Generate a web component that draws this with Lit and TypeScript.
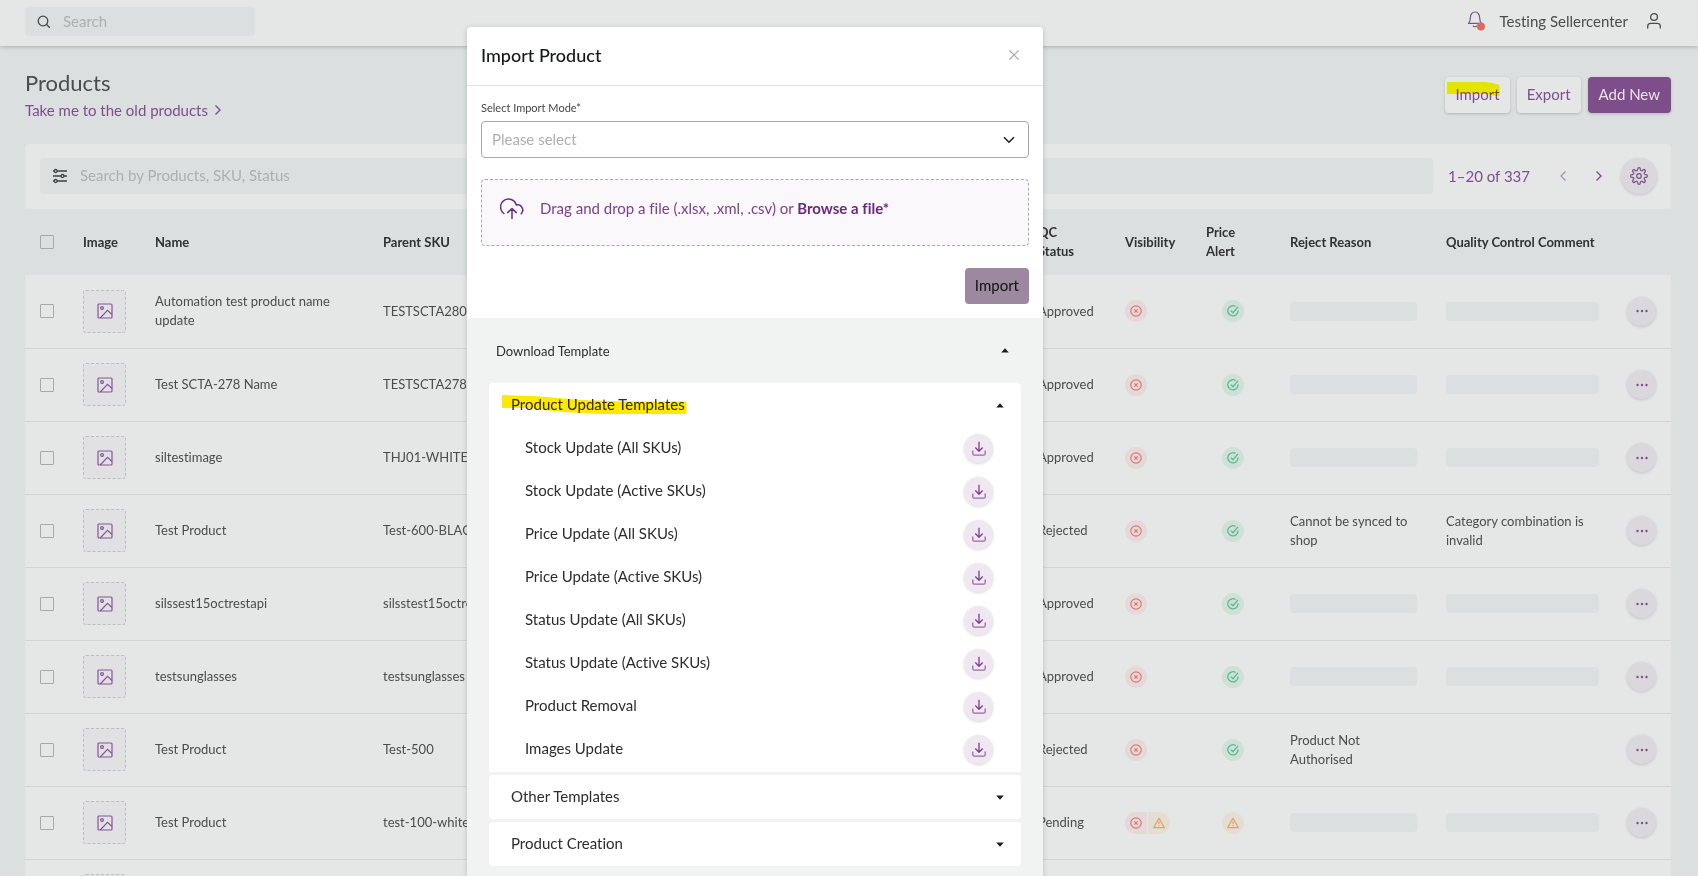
import { LitElement, html, css, nothing } from "lit";
import { customElement, state } from "lit/decorators.js";

interface Product {
  name: string;
  sku: string;
  status: string;
  warn?: boolean;
  reason?: string;
  comment?: string;
}

const PRODUCTS: Product[] = [
  { name: "Automation test product name update", sku: "TESTSCTA280", status: "Approved" },
  { name: "Test SCTA-278 Name", sku: "TESTSCTA278", status: "Approved" },
  { name: "siltestimage", sku: "THJ01-WHITE", status: "Approved" },
  { name: "Test Product", sku: "Test-600-BLACK", status: "Rejected", reason: "Cannot be synced to shop", comment: "Category combination is invalid" },
  { name: "silssest15octrestapi", sku: "silsstest15octrestapi", status: "Approved" },
  { name: "testsunglasses", sku: "testsunglasses", status: "Approved" },
  { name: "Test Product", sku: "Test-500", status: "Rejected", reason: "Product Not Authorised", comment: "" },
  { name: "Test Product", sku: "test-100-white", status: "Pending", warn: true },
  { name: "", sku: "", status: "" },
];

const UPDATE_TEMPLATES = [
  "Stock Update (All SKUs)",
  "Stock Update (Active SKUs)",
  "Price Update (All SKUs)",
  "Price Update (Active SKUs)",
  "Status Update (All SKUs)",
  "Status Update (Active SKUs)",
  "Product Removal",
  "Images Update",
];

const searchIcon = html`<svg width="14" height="14" viewBox="0 0 14 14" fill="none" stroke="#444746" stroke-width="1.3"><circle cx="6" cy="6" r="4.8"/><path d="M9.5 9.5 12.8 12.8"/></svg>`;
const bellIcon = html`<svg width="18" height="20" viewBox="0 0 18 20" fill="none"><path d="M1.500 12.400c1.300-1.200 1.800-2.400 1.800-5.400C3.300 3.400 5.200 1 8 1s4.700 2.400 4.700 6c0 3 .5 4.200 1.800 5.400zM6 14.600c.6 1.500 3.400 1.500 4 0" stroke="#7c4f8b" stroke-width="1.200" stroke-linejoin="round"/><circle cx="14" cy="15.500" r="4" fill="#dd6a62"/></svg>`;
const userIcon = html`<svg width="16" height="18" viewBox="0 0 16 18" fill="none" stroke="#4a4d4c" stroke-width="1.300" stroke-linecap="round"><circle cx="8" cy="5" r="3.400"/><path d="M1.700 16v-1.700c0-1.900 1.300-3 3-3h6.600c1.700 0 3 1.100 3 3V16"/></svg>`;
const slidersIcon = html`<svg width="16" height="16" viewBox="0 0 16 16" fill="none" stroke="#3f4241" stroke-width="1.300"><path d="M1 3h1.300M5 3h10M1 8h8M12 8h3M1 13h1.300M5 13h10"/><circle cx="3.700" cy="3" r="1.500"/><circle cx="10.500" cy="8" r="1.500"/><circle cx="3.700" cy="13" r="1.500"/></svg>`;
const chevronRight = html`<svg width="8" height="12" viewBox="0 0 8 12" fill="none" stroke="currentColor" stroke-width="1.400"><path d="M1.500 1.500 6 6 1.500 10.500"/></svg>`;
const chevronLeft = html`<svg width="8" height="12" viewBox="0 0 8 12" fill="none" stroke="currentColor" stroke-width="1.200"><path d="M6.500 1.500 2 6l4.500 4.500"/></svg>`;
const gearIcon = html`<svg width="18" height="18" viewBox="0 0 18 18" fill="none" stroke="#7c4f8b" stroke-width="1.200" stroke-linejoin="round"><circle cx="9" cy="9" r="2.300"/><path d="M7.700 1.900a1.300 1.300 0 0 1 2.600 0v.7a1.300 1.300 0 0 0 2.200.9l.5-.5a1.400 1.400 0 0 1 2 2l-.5.500a1.300 1.300 0 0 0 .9 2.200h.7a1.300 1.300 0 0 1 0 2.600h-.7a1.300 1.300 0 0 0-.9 2.200l.5.500a1.400 1.400 0 0 1-2 2l-.5-.5a1.300 1.300 0 0 0-2.200.9v.7a1.300 1.300 0 0 1-2.600 0v-.7a1.300 1.300 0 0 0-2.200-.9l-.5.500a1.400 1.400 0 0 1-2-2l.5-.5a1.300 1.300 0 0 0-.9-2.200h-.7a1.300 1.300 0 0 1 0-2.600h.7a1.300 1.300 0 0 0 .9-2.200L3 5a1.400 1.400 0 0 1 2-2l.5.500a1.300 1.300 0 0 0 2.200-.9z"/></svg>`;
const pictureIcon = html`<svg width="16" height="16" viewBox="0 0 16 16" fill="none" stroke="#85569a" stroke-width="1.200"><rect x="1" y="1" width="14" height="14" rx="1"/><circle cx="5" cy="5" r="1.400"/><path d="M3.200 15 10.500 7.300 15 11.500"/></svg>`;
const rejectedIcon = html`<svg width="12" height="12" viewBox="0 0 12 12" fill="none" stroke="#dd7770" stroke-width="1.200"><circle cx="6" cy="6" r="5.200"/><path d="M4.300 4.300 7.700 7.700M7.700 4.300 4.300 7.700"/></svg>`;
const okIcon = html`<svg width="12" height="12" viewBox="0 0 12 12" fill="none" stroke="#55bd8c" stroke-width="1.300"><path d="M8.600 1.500A5.100 5.100 0 1 0 11 5.500"/><path d="M3.900 5.700 6 7.700 11 1.800"/></svg>`;
const warnIcon = html`<svg width="12" height="12" viewBox="0 0 12 12" fill="none" stroke="#e2a55c" stroke-width="1.200" stroke-linejoin="round"><path d="M6 1.200 11.300 10.600H.7zM6 4.500v2.700M6 8.300v1"/></svg>`;
const dotsIcon = html`<svg width="12" height="4" viewBox="0 0 12 4" fill="#7c4f8b"><circle cx="1.500" cy="2" r="1.200"/><circle cx="6" cy="2" r="1.200"/><circle cx="10.500" cy="2" r="1.200"/></svg>`;
const closeIcon = html`<svg width="10" height="10" viewBox="0 0 10 10" stroke="#a3a7a6" stroke-width="1.100"><path d="M.5.500 9.500 9.500M9.500.5.500 9.500"/></svg>`;
const chevronDown = html`<svg class="chev" width="12" height="8" viewBox="0 0 12 8" fill="none" stroke="#1f2221" stroke-width="1.500"><path d="M1 1.200 6 6.300 11 1.200"/></svg>`;
const cloudIcon = html`<svg width="24" height="22" viewBox="0 0 24 22" fill="none" stroke="#6d2c80" stroke-width="1.500" stroke-linecap="round" stroke-linejoin="round"><path d="M3.900 15.500A8 8 0 1 1 16.300 6.900a5.300 5.300 0 0 1 4.900 8.900"/><path d="M12 20.500v-9.700M7.700 14.600 12 10.500l4.300 4.100"/></svg>`;
const downloadIcon = html`<svg width="14" height="16" viewBox="0 0 14 16" fill="none" stroke-linejoin="round"><path d="M.8 9.500v3.200c0 .9.500 1.500 1.500 1.500h9.400c1 0 1.500-.6 1.500-1.500V9.500" stroke="#9a68aa" stroke-width="1.300"/><path d="M7 .8v9.200M3.300 6.500 7 10.200l3.700-3.700" stroke="#7b3d8e" stroke-width="1.300"/></svg>`;
const triUp = html`<svg width="8" height="5" viewBox="0 0 8 5" fill="#1b1e1d"><path d="M.2 4.600 4 .3l3.800 4.300z"/></svg>`;
const triDown = html`<svg width="8" height="5" viewBox="0 0 8 5" fill="#1b1e1d"><path d="M.2.400 4 4.700 7.800.400z"/></svg>`;

@customElement("app-root")
export class AppRoot extends LitElement {
  @state() private updatesOpen = true;

  static styles = css`
    :host {
      display: block;
      position: relative;
      height: 100vh;
      overflow: hidden;
      background: #dbdfdf;
      color: #4a4d4c;
      font: 15px/20px Lato, sans-serif;
      font-variant-ligatures: none;
    }
    * { box-sizing: border-box; }
    h1, h2, p, ul { margin: 0; padding: 0; }
    svg { display: block; flex: none; }
    button, input, select { font: inherit; color: inherit; }
    button { border: 0; background: none; padding: 0; cursor: pointer; }
    input::placeholder { color: #acb0b0; opacity: 1; }

    .topbar {
      display: flex;
      align-items: center;
      justify-content: space-between;
      height: 46px;
      padding: 0 36px 3px 25px;
      background: #e5e7e6;
      box-shadow: 0 1px 4px rgba(60, 70, 70, 0.3);
    }
    .field { display: flex; align-items: center; background: #dbdfdf; border-radius: 4px; }
    .field input { flex: 1; min-width: 0; border: 0; padding: 0 0 2px; background: none; outline: none; }
    .topsearch { width: 230px; height: 29px; padding: 0 13px 0 12px; gap: 12px; }
    .account { display: flex; align-items: center; gap: 14px; padding-bottom: 2px; }
    .account .user { display: flex; align-items: center; gap: 18px; }

    .page { padding: 0 27px 0 25px; }
    .heading { display: flex; justify-content: space-between; padding: 24px 0; }
    h1 { font-size: 22px; line-height: 26px; font-weight: 400; }
    .old { display: inline-flex; align-items: center; gap: 6px; margin-top: 4px; color: #7f4d8e; text-decoration: none; }
    .actions { display: flex; gap: 7px; padding-top: 7px; }
    .btn {
      position: relative;
      height: 36px;
      padding: 0 10px 2px;
      border-radius: 4px;
      background: #e5e7e6;
      color: #7f4d8e;
      box-shadow: 0 1px 3px rgba(60, 70, 70, 0.25);
    }
    .btn.primary { padding: 0 11px 2px; background: #7e4e8b; color: #e8e4e9; }
    .marker { position: absolute; left: 2px; top: 5px; mix-blend-mode: multiply; }

    .filter { display: flex; align-items: center; height: 65px; padding: 0 14px 2px 15px; background: #e5e7e6; border-radius: 4px 4px 0 0; }
    .filter .field { flex: 1; height: 36px; padding: 0 12px; gap: 12px; }
    .pager { display: flex; align-items: center; color: #7f4d8e; padding-left: 15px; }
    .pager button { width: 36px; height: 36px; display: grid; place-items: center; }
    .pager .prev { margin-left: 15px; color: #a493ab; }
    .pager .round { margin-left: 4px; }
    .round { display: grid; place-items: center; border-radius: 50%; background: #dad7dd; box-shadow: 0 1px 3px rgba(60, 60, 70, 0.2); }

    table { width: 100%; border-collapse: collapse; table-layout: fixed; font-size: 13px; line-height: 19px; }
    th { height: 66px; padding: 0; text-align: left; font-weight: 700; color: #2f3231; }
    td { height: 73px; padding: 0; border-bottom: 1px solid #d2d5d5; background: #e5e7e6; }
    .c-check { width: 58px; }
    .c-image { width: 72px; }
    .c-name { width: 228px; }
    .c-status { width: 87px; }
    .c-vis { width: 81px; }
    .c-price { width: 84px; }
    .c-reason { width: 156px; }
    .c-comment { width: 181px; }
    .c-menu { width: 44px; }
    .check { padding-left: 15px; }
    .check input { display: block; appearance: none; width: 14px; height: 14px; margin: 0; border: 1px solid #a5a9aa; border-radius: 1px; }
    .thumb { display: grid; place-items: center; width: 43px; height: 43px; border: 1px dashed #bcbec1; border-radius: 3px; background: #e1e0e3; }
    .name { padding-right: 42px; }
    .sku { white-space: nowrap; overflow: hidden; }
    .pills { display: flex; gap: 1px; }
    .pill { display: grid; place-items: center; width: 22px; height: 22px; }
    .pills .pill:first-child { border-radius: 11px 0 0 11px; }
    .pills .pill:last-child { border-top-right-radius: 11px; border-bottom-right-radius: 11px; }
    .red { background: #e4d9d8; }
    .amber { background: #e4ddd3; }
    .green { background: #d0dfd8; }
    .alert { border-radius: 50%; margin-left: 16px; }
    .bar { height: 19px; background: #dbdfdf; border-radius: 4px; }
    .reason { padding-right: 29px; }
    .comment { padding-right: 28px; }
    td .round { width: 29px; height: 29px; }

    .layer { position: absolute; inset: 0; display: flex; justify-content: center; align-items: flex-start; padding: 27px 188px 0 0; }
    .modal { width: 576px; background: #fff; border-radius: 4px; box-shadow: 0 1px 5px rgba(60, 70, 70, 0.25); color: #2b2e2d; overflow: hidden; }
    .modal header { display: flex; justify-content: space-between; align-items: center; height: 59px; padding: 0 24px 2px 14px; border-bottom: 1px solid #e1e3e3; }
    h2 { font-size: 18px; line-height: 24px; font-weight: 500; color: #161918; }
    .form { padding: 14px; }
    .form label.mode { display: block; font-size: 11px; line-height: 16px; margin-bottom: 5px; color: #444746; }
    .select { display: grid; align-items: center; }
    .select > * { grid-area: 1 / 1; }
    .select select { appearance: none; width: 100%; height: 37px; padding: 0 10px 2px; border: 1px solid #a5a9aa; border-radius: 4px; background: #fff; color: #acb0b3; outline: none; }
    .chev { justify-self: end; margin-right: 14px; pointer-events: none; }
    .drop { display: flex; align-items: flex-start; gap: 16px; height: 67px; margin-top: 21px; padding: 18px; border: 1px dashed #a9a9af; border-radius: 4px; background: #faf8fb; color: #7b3f8d; }
    .drop strong { color: #6a2a7d; }
    .drop input { display: none; }
    .submit { display: block; height: 36px; margin: 22px 0 0 auto; padding: 0 10px 2px; border-radius: 4px; background: #9c889f; color: #111; }
    .download { background: #f1f3f2; border-radius: 4px 4px 0 0; padding: 0 22px 11px; }
    .toggle { display: flex; width: 100%; align-items: center; justify-content: space-between; text-align: left; }
    .download > .toggle { height: 65px; padding: 0 12px 0 7px; font-size: 13px; }
    .group { background: #fff; border-radius: 4px; margin-bottom: 3px; }
    .group > .toggle { height: 44px; padding: 0 17px 0 22px; }
    .group > .toggle > span, .group li > span { padding-bottom: 3px; }
    .group.open { border-radius: 4px 4px 0 0; }
    .marked { position: relative; }
    .marked svg { position: absolute; left: -9px; top: 1px; mix-blend-mode: multiply; }
    .group li { display: flex; align-items: center; justify-content: space-between; height: 43px; padding: 0 28px 0 36px; }
    .group li .round { width: 29px; height: 29px; background: #f0e8f1; }
    .group ul { padding-bottom: 1px; }
  `;

  private row(p: Product) {
    const value = (v?: string) => (v === undefined ? html`<div class="bar"></div>` : v);
    return html`<tr>
      <td class="check"><input type="checkbox" aria-label="Select product" /></td>
      <td><div class="thumb">${pictureIcon}</div></td>
      <td class="name">${p.name}</td>
      <td class="sku">${p.sku}</td>
      <td>${p.status}</td>
      <td><div class="pills"><span class="pill red">${rejectedIcon}</span>${p.warn ? html`<span class="pill amber">${warnIcon}</span>` : nothing}</div></td>
      <td><span class="pill alert ${p.warn ? "amber" : "green"}">${p.warn ? warnIcon : okIcon}</span></td>
      <td class="reason">${value(p.reason)}</td>
      <td class="comment">${value(p.comment)}</td>
      <td><button class="round" aria-label="Product actions">${dotsIcon}</button></td>
    </tr>`;
  }

  render() {
    return html`
      <div class="topbar">
        <div class="field topsearch">${searchIcon}<input type="search" placeholder="Search" aria-label="Search" /></div>
        <div class="account">
          <button aria-label="Notifications">${bellIcon}</button>
          <button class="user">Testing Sellercenter ${userIcon}</button>
        </div>
      </div>
      <main class="page">
        <div class="heading">
          <div>
            <h1>Products</h1>
            <a class="old" href="#">Take me to the old products ${chevronRight}</a>
          </div>
          <div class="actions">
            <button class="btn">Import
              <svg class="marker" width="53" height="16" viewBox="0 0 53 16" fill="#fffb00"><path d="M0 0h37q10 .5 15.500 3v11l-6-.5Q42 12 36 12H0z"/></svg>
            </button>
            <button class="btn">Export</button>
            <button class="btn primary">Add New</button>
          </div>
        </div>
        <div class="filter">
          <div class="field">${slidersIcon}<input placeholder="Search by Products, SKU, Status" aria-label="Search products" /></div>
          <div class="pager">
            <span>1–20 of 337</span>
            <button class="prev" aria-label="Previous page">${chevronLeft}</button>
            <button aria-label="Next page">${chevronRight}</button>
            <button class="round" aria-label="Table settings">${gearIcon}</button>
          </div>
        </div>
        <table>
          <colgroup>
            <col class="c-check" /><col class="c-image" /><col class="c-name" /><col /><col class="c-status" />
            <col class="c-vis" /><col class="c-price" /><col class="c-reason" /><col class="c-comment" /><col class="c-menu" />
          </colgroup>
          <thead>
            <tr>
              <th class="check"><input type="checkbox" aria-label="Select all" /></th>
              <th>Image</th><th>Name</th><th>Parent SKU</th><th>QC<br />Status</th><th>Visibility</th>
              <th>Price<br />Alert</th><th>Reject Reason</th><th>Quality Control Comment</th><th></th>
            </tr>
          </thead>
          <tbody>${PRODUCTS.map((p) => this.row(p))}</tbody>
        </table>
      </main>

      <div class="layer">
        <section class="modal" role="dialog" aria-labelledby="title">
          <header>
            <h2 id="title">Import Product</h2>
            <button aria-label="Close">${closeIcon}</button>
          </header>
          <div class="form">
            <label class="mode" for="mode">Select Import Mode*</label>
            <div class="select">
              <select id="mode"><option>Please select</option></select>
              ${chevronDown}
            </div>
            <label class="drop">
              ${cloudIcon}
              <span>Drag and drop a file (.xlsx, .xml, .csv) or <strong>Browse a file*</strong></span>
              <input type="file" accept=".xlsx,.xml,.csv" />
            </label>
            <button class="submit">Import</button>
          </div>
          <div class="download">
            <button class="toggle">Download Template ${triUp}</button>
            <div class="group ${this.updatesOpen ? "open" : ""}">
              <button class="toggle" @click=${() => (this.updatesOpen = !this.updatesOpen)}>
                <span class="marked">Product Update Templates
                  <svg width="185" height="19" viewBox="0 0 185 19" fill="#ffe900"><path d="M0 0 32 1 80 5 120 6.500H184.500V19H100L60 17 25 13H0z"/></svg>
                </span>
                ${this.updatesOpen ? triUp : triDown}
              </button>
              ${this.updatesOpen
                ? html`<ul>${UPDATE_TEMPLATES.map((t) => html`<li><span>${t}</span><button class="round" aria-label="Download ${t}">${downloadIcon}</button></li>`)}</ul>`
                : nothing}
            </div>
            <div class="group"><button class="toggle"><span>Other Templates</span> ${triDown}</button></div>
            <div class="group"><button class="toggle"><span>Product Creation</span> ${triDown}</button></div>
          </div>
        </section>
      </div>
    `;
  }
}
